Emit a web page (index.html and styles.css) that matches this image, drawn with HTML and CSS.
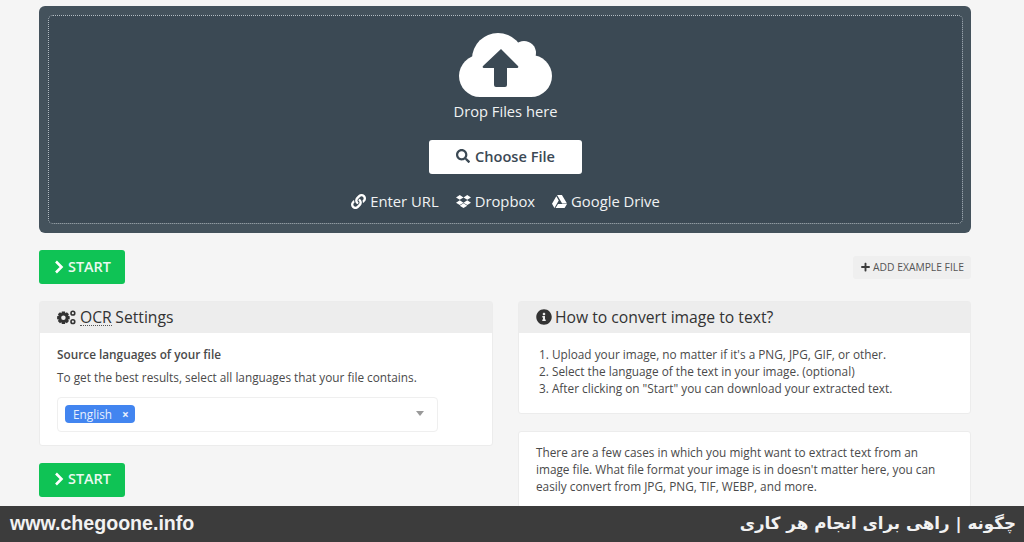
FILE: index.html
```html
<!DOCTYPE html>
<html lang="en">
<head>
<meta charset="utf-8">
<title>Convert image to text</title>
<link rel="stylesheet" href="styles.css">
</head>
<body>
<div class="page">
  <main class="main">
    <section class="upload">
      <div class="drop">
        <svg class="cloud" viewBox="0 0 93 64" width="93" height="64">
          <circle cx="39" cy="26" r="26" fill="#fff"/>
          <circle cx="65" cy="20" r="12" fill="#fff"/>
          <circle cx="21" cy="43" r="21" fill="#fff"/>
          <circle cx="72" cy="43" r="21" fill="#fff"/>
          <rect x="21" y="26" width="51" height="38" fill="#fff"/>
          <path d="M42 16 L59 33 Q60 35 58 35 H48 V52 Q48 54 46 54 H37 Q35 54 35 52 V35 H25 Q23 35 24 33 Z" fill="#3b4954"/>
        </svg>
        <div class="drop-label">Drop Files here</div>
        <button class="choose">
          <svg class="icon-md" viewBox="0 0 512 512"><path fill="#3b4954" d="M505 442.7L405.3 343c-4.5-4.5-10.6-7-17-7H372c27.6-35.3 44-79.7 44-128C416 93.1 322.9 0 208 0S0 93.1 0 208s93.1 208 208 208c48.3 0 92.7-16.4 128-44v16.3c0 6.4 2.5 12.5 7 17l99.7 99.7c9.4 9.4 24.6 9.4 33.9 0l28.3-28.3c9.4-9.4 9.4-24.6.1-34zM208 336c-70.7 0-128-57.2-128-128 0-70.7 57.2-128 128-128 70.7 0 128 57.2 128 128 0 70.7-57.2 128-128 128z"/></svg>
          <span>Choose File</span>
        </button>
        <div class="sources">
          <span class="source">
            <svg class="icon-src" viewBox="0 0 512 512"><path fill="#fff" d="M326.612 185.391c59.747 59.809 58.927 155.698.36 214.59-.11.12-.24.25-.36.37l-67.2 67.2c-59.27 59.27-155.699 59.262-214.96 0-59.27-59.26-59.27-155.7 0-214.96l37.106-37.106c9.84-9.84 26.786-3.3 27.294 10.606.648 17.722 3.826 35.527 9.69 52.721 1.986 5.822.567 12.262-3.783 16.612l-13.087 13.087c-28.026 28.026-28.905 73.66-1.155 101.96 28.024 28.579 74.086 28.749 102.325.51l67.2-67.19c28.191-28.191 28.073-73.757 0-101.83-3.701-3.694-7.429-6.564-10.341-8.569a16.037 16.037 0 0 1-6.947-12.606c-.396-10.567 3.348-21.456 11.698-29.806l21.054-21.055c5.521-5.521 14.182-6.199 20.584-1.731a152.482 152.482 0 0 1 20.522 17.197zM467.547 44.449c-59.261-59.262-155.69-59.27-214.96 0l-67.2 67.2c-.12.12-.25.25-.36.37-58.566 58.892-59.387 154.781.36 214.59a152.454 152.454 0 0 0 20.521 17.196c6.402 4.468 15.064 3.789 20.584-1.731l21.054-21.055c8.35-8.35 12.094-19.239 11.698-29.806a16.037 16.037 0 0 0-6.947-12.606c-2.912-2.005-6.64-4.875-10.341-8.569-28.073-28.073-28.191-73.639 0-101.83l67.2-67.19c28.239-28.239 74.3-28.069 102.325.51 27.75 28.3 26.872 73.934-1.155 101.96l-13.087 13.087c-4.35 4.35-5.769 10.79-3.783 16.612 5.864 17.194 9.042 34.999 9.69 52.721.509 13.906 17.454 20.446 27.294 10.606l37.106-37.106c59.271-59.259 59.271-155.699.001-214.959z"/></svg>
            <span>Enter URL</span>
          </span>
          <span class="source">
            <svg class="icon-src" viewBox="0 0 16 14"><path fill="#fff" d="M4 0 L8 2.6 L4 5.2 L0 2.6 Z M12 0 L16 2.6 L12 5.2 L8 2.6 Z M4 5.6 L8 8.2 L4 10.8 L0 8.2 Z M12 5.6 L16 8.2 L12 10.8 L8 8.2 Z M4 11.4 L8 8.9 L12 11.4 L8 14 Z"/></svg>
            <span>Dropbox</span>
          </span>
          <span class="source">
            <svg class="icon-src" viewBox="0 0 16 14"><path fill="#fff" d="M5.4 0 H10.6 L16 9.2 H10.8 Z M4.6 1.4 L7.2 5.9 L2.6 14 L0 9.4 Z M3.8 14 L6.4 9.6 H16 L13.4 14 Z"/></svg>
            <span>Google Drive</span>
          </span>
        </div>
      </div>
    </section>

    <div class="actions">
      <button class="start">
        <svg class="chevron" viewBox="0 0 10 14"><path d="M2 1.5 L7.5 7 L2 12.5" fill="none" stroke="#fff" stroke-width="2.6"/></svg>
        <span>START</span>
      </button>
      <button class="example">
        <svg class="plus" viewBox="0 0 448 512"><path fill="#3c3c3c" d="M416 208H272V64c0-17.67-14.33-32-32-32h-32c-17.67 0-32 14.33-32 32v144H32c-17.67 0-32 14.33-32 32v32c0 17.67 14.33 32 32 32h144v144c0 17.67 14.33 32 32 32h32c17.67 0 32-14.33 32-32V304h144c17.67 0 32-14.33 32-32v-32c0-17.67-14.33-32-32-32z"/></svg>
        <span>ADD EXAMPLE FILE</span>
      </button>
    </div>

    <div class="columns">
      <div class="col">
        <section class="card">
          <h2 class="card-head">
            <svg class="gears" viewBox="0 0 20 16">
              <path fill="#333" fill-rule="evenodd" d="M5 1.5 H8.4 L8.8 3.4 L10.4 2.4 L12.6 4.6 L11.6 6.2 L13.4 6.6 V9.8 L11.6 10.2 L12.6 11.8 L10.4 14 L8.8 13 L8.4 15 H5 L4.6 13 L3 14 L.8 11.8 L1.8 10.2 L0 9.8 V6.6 L1.8 6.2 L.8 4.6 L3 2.4 L4.6 3.4 Z M6.7 5.8 A2.4 2.4 0 1 0 6.7 10.6 A2.4 2.4 0 1 0 6.7 5.8 Z"/>
              <circle cx="16.8" cy="3.4" r="2" fill="none" stroke="#333" stroke-width="1.7"/>
              <circle cx="16.8" cy="12.4" r="2" fill="none" stroke="#333" stroke-width="1.7"/>
            </svg>
            <span class="abbr">OCR</span>
            <span>Settings</span>
          </h2>
          <div class="card-body settings">
            <div class="field-title">Source languages of your file</div>
            <p class="field-help">To get the best results, select all languages that your file contains.</p>
            <div class="select">
              <span class="tag"><span>English</span> <span class="tag-x">×</span></span>
              <span class="caret"></span>
            </div>
          </div>
        </section>
        <button class="start">
          <svg class="chevron" viewBox="0 0 10 14"><path d="M2 1.5 L7.5 7 L2 12.5" fill="none" stroke="#fff" stroke-width="2.6"/></svg>
          <span>START</span>
        </button>
      </div>
      <div class="col">
        <section class="card">
          <h2 class="card-head">
            <svg class="icon-head" viewBox="0 0 512 512"><path fill="#333" d="M256 8C119.043 8 8 119.083 8 256c0 136.997 111.043 248 248 248s248-111.003 248-248C504 119.083 392.957 8 256 8zm0 110c23.196 0 42 18.804 42 42s-18.804 42-42 42-42-18.804-42-42 18.804-42 42-42zm56 254c0 6.627-5.373 12-12 12h-88c-6.627 0-12-5.373-12-12v-24c0-6.627 5.373-12 12-12h12v-64h-12c-6.627 0-12-5.373-12-12v-24c0-6.627 5.373-12 12-12h64c6.627 0 12 5.373 12 12v100h12c6.627 0 12 5.373 12 12v24z"/></svg>
            <span>How to convert image to text?</span>
          </h2>
          <div class="card-body howto">
            <div>1. Upload your image, no matter if it's a PNG, JPG, GIF, or other.</div>
            <div>2. Select the language of the text in your image. (optional)</div>
            <div>3. After clicking on "Start" you can download your extracted text.</div>
          </div>
        </section>
        <section class="card card-text">
          <p>There are a few cases in which you might want to extract text from an image file. What file format your image is in doesn't matter here, you can easily convert from JPG, PNG, TIF, WEBP, and more.</p>
        </section>
      </div>
    </div>
  </main>
  <footer class="banner">
    <span class="banner-url">www.chegoone.info</span>
    <span class="banner-fa" lang="fa" dir="rtl">چگونه | راهی برای انجام هر کاری</span>
  </footer>
</div>
</body>
</html>
```
FILE: styles.css
```css
* { box-sizing: border-box; }
html, body { margin: 0; padding: 0; }
body {
  background: #f5f5f5;
  color: #4a4a4a;
  font-family: "Open Sans", "Liberation Sans", sans-serif;
}
.page { position: relative; width: 1024px; height: 542px; overflow: hidden; }
.main { width: 932px; margin-left: 39px; padding-top: 6px; }

.upload { background: #44525c; border-radius: 6px; padding: 9px 8px 9px 9px; height: 227px; }
.drop {
  height: 100%;
  background: #3b4954;
  border: 1px dotted #b4bdc3;
  border-radius: 5px;
  display: flex;
  flex-direction: column;
  align-items: center;
  padding-top: 17px;
  color: #f0f2f3;
}
.cloud { display: block; }
.drop-label { font-size: 14.7px; line-height: 20px; margin-top: 4px; }
.choose {
  width: 153px;
  height: 34px;
  margin-top: 19px;
  padding: 0 0 2px;
  background: #fff;
  border: 0;
  border-radius: 3px;
  font: 600 14.6px "Open Sans", sans-serif;
  color: #3b4954;
  display: flex;
  align-items: center;
  justify-content: center;
  gap: 5px;
}
.icon-md { width: 14px; height: 14px; flex: none; }
.icon-src { width: 15px; height: 15px; flex: none; }
.sources { display: flex; gap: 17px; margin-top: 17px; }
.source { display: flex; align-items: center; gap: 4px; font-size: 14.8px; line-height: 20px; }

.actions { display: flex; justify-content: space-between; align-items: center; margin-top: 17px; }
.start {
  width: 86px;
  height: 34px;
  padding: 0 0 1px 1px;
  background: #0fc355;
  border: 0;
  border-radius: 3px;
  color: #eaf9f0;
  font: 600 14.4px "Open Sans", sans-serif;
  display: flex;
  align-items: center;
  justify-content: center;
  gap: 4px;
}
.chevron { width: 10px; height: 14px; }
.example {
  width: 118px;
  height: 23px;
  padding: 0 0 0 1px;
  background: #efefef;
  border: 0;
  border-radius: 3px;
  color: #555;
  font: 400 10.3px "Open Sans", sans-serif;
  display: flex;
  align-items: center;
  justify-content: center;
  gap: 3px;
}
.plus { width: 9px; height: 10px; }

.columns { display: grid; grid-template-columns: 454px 453px; column-gap: 25px; margin-top: 17px; }
.col { display: flex; flex-direction: column; align-items: flex-start; }
.col .start { margin-top: 17px; padding-bottom: 3px; }
.card { width: 100%; background: #fff; border: 1px solid #ececec; border-radius: 3px; }
.card-head {
  margin: 0;
  height: 31px;
  padding: 0 0 1px 17px;
  background: #ededed;
  font-size: 15.7px;
  font-weight: 400;
  line-height: 29px;
  color: #333;
  display: flex;
  align-items: center;
}
.gears { width: 19px; height: 15px; margin-right: 4px; flex: none; }
.icon-head { width: 16px; height: 16px; margin-right: 3px; flex: none; }
.abbr { border-bottom: 1px dotted #555; line-height: 16px; margin-right: 3.5px; }
.card-body { font-size: 11.8px; line-height: 17px; }
.settings { padding: 13px 17px 0; height: 112px; }
.field-title { font-weight: 600; }
.field-help { margin: 6px 0 0; }
.select {
  position: relative;
  width: 381px;
  height: 35px;
  margin-top: 11px;
  border: 1px solid #efefef;
  border-radius: 4px;
  padding: 7px;
  display: flex;
  align-items: flex-start;
}
.tag {
  background: #4285f0;
  color: #e8f0fd;
  border-radius: 4px;
  height: 18px;
  width: 70px;
  padding-left: 8px;
  font-size: 11.8px;
  line-height: 18px;
  display: flex;
  gap: 10px;
}
.tag-x { font-weight: 700; }
.caret {
  position: absolute;
  right: 13px;
  top: 13px;
  border: 4.5px solid transparent;
  border-top: 5px solid #999;
  border-bottom: 0;
}
.howto { padding: 13px 20px 0; height: 80px; }
.card-text { margin-top: 17px; padding: 12px 17px; font-size: 11.8px; line-height: 17px; }
.card-text p { margin: 0; }

.banner {
  position: absolute;
  left: 0;
  right: 0;
  bottom: 0;
  height: 36px;
  background: #3c3c3c;
  color: #f2f2f2;
  display: flex;
  justify-content: space-between;
  align-items: center;
  padding: 0 8px 2px 10px;
}
.banner-url { font: 700 19.6px "Liberation Sans", Arial, sans-serif; }
.banner-fa { font: 700 16.7px "DejaVu Sans", sans-serif; }
```
